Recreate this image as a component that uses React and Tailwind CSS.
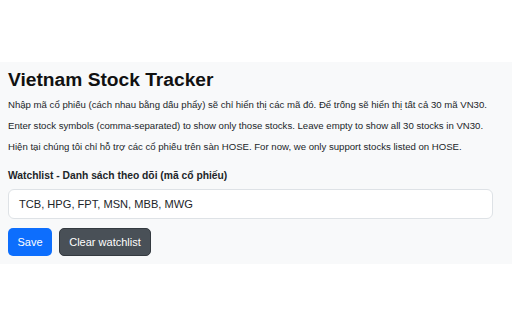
export default function App() {
  return (
    <div className="w-[512px] h-[320px] bg-white" style={{ fontFamily: '"Liberation Sans", Arial, sans-serif' }}>
      <div className="h-[62px]" />
      <div className="bg-[#f8f9fa] px-2 pt-[6px] pb-2 h-[202px]">
        <h1 className="text-[19.2px] font-bold leading-[24px] text-[#111] mb-[5px]">Vietnam Stock Tracker</h1>
        <p className="text-[9.6px] leading-[15px] text-[#212529] mb-[6px] whitespace-nowrap">Nhập mã cổ phiếu (cách nhau bằng dấu phẩy) sẽ chỉ hiển thị các mã đó. Để trống sẽ hiển thị tất cả 30 mã VN30.</p>
        <p className="text-[9.6px] leading-[15px] text-[#212529] mb-[6px] whitespace-nowrap">Enter stock symbols (comma-separated) to show only those stocks. Leave empty to show all 30 stocks in VN30.</p>
        <p className="text-[9.6px] leading-[15px] text-[#212529] mb-[14px] whitespace-nowrap">Hiện tại chúng tôi chỉ hỗ trợ các cổ phiếu trên sàn HOSE. For now, we only support stocks listed on HOSE.</p>
        <div className="text-[10.3px] leading-[15px] font-bold text-[#212529] mb-[6px]">Watchlist - Danh sách theo dõi (mã cổ phiếu)</div>
        <div className="w-[485px] h-[30px] bg-white border border-[#dee2e6] rounded-[6px] flex items-center px-[10px] text-[11.1px] text-[#212529] mb-[9px]">TCB, HPG, FPT, MSN, MBB, MWG</div>
        <div className="flex gap-[7px]">
          <button className="h-[28px] w-[44px] rounded-[5px] bg-[#0d6efd] text-white text-[11px]">Save</button>
          <button className="h-[28px] w-[92px] rounded-[5px] bg-[#495057] border border-[#343a40] text-white text-[11px]">Clear watchlist</button>
        </div>
      </div>
    </div>
  );
}
